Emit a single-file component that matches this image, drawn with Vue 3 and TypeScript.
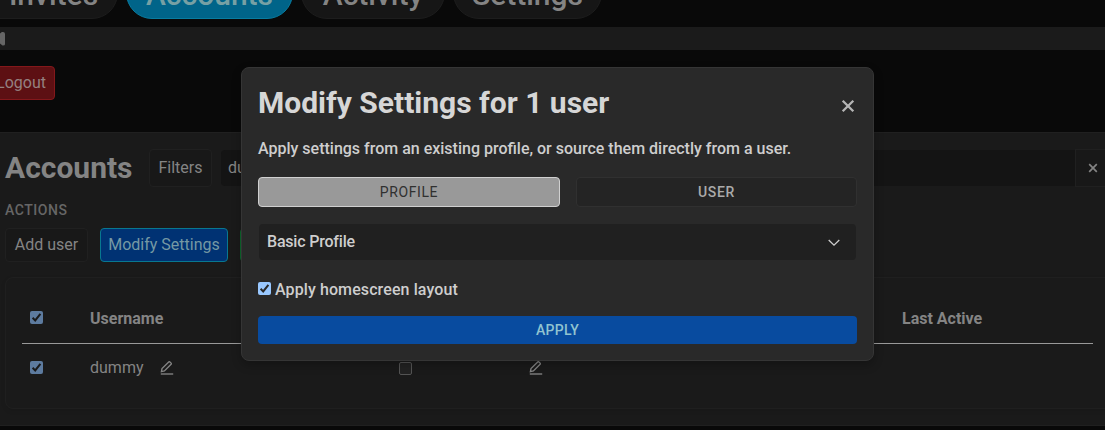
<script setup lang="ts">
import { ref } from 'vue'

const tabs = [
  { label: 'Invites', cls: 'invites' },
  { label: 'Accounts', cls: 'accounts' },
  { label: 'Activity', cls: 'activity' },
  { label: 'Settings', cls: 'settings' },
]
const active = ref('Accounts')
const source = ref<'profile' | 'user'>('profile')
const homescreen = ref(true)
</script>

<template>
  <div class="page">
    <nav class="tabs">
      <button v-for="t in tabs" :key="t.label" class="tab" :class="[t.cls, { on: active === t.label }]" @click="active = t.label">
        {{ t.label }}
      </button>
    </nav>
    <div class="track"><span class="thumb"></span></div>
    <div class="logout-row"><button class="logout"><span>Logout</span></button></div>

    <main class="card">
      <div class="head">
        <h1>Accounts</h1>
        <button class="btn filters">Filters</button>
        <div class="search">dummy</div>
        <button class="btn clear">
          <svg width="10" height="10" viewBox="0 0 10 10"><path d="M1.2 1.2l7.6 7.6M8.8 1.2L1.2 8.8" /></svg>
        </button>
      </div>
      <div class="label">ACTIONS</div>
      <div class="actions">
        <button class="btn add">Add user</button>
        <button class="btn modify">Modify Settings</button>
        <button class="btn green"></button>
      </div>
      <section class="table">
        <div class="row header">
          <span class="check"><svg viewBox="0 0 13 13"><path d="M2.6 6.8l2.6 2.6 5.2-6.6" /></svg></span>
          <span class="username">Username</span>
          <span class="last">Last Active</span>
        </div>
        <div class="row body">
          <span class="check"><svg viewBox="0 0 13 13"><path d="M2.6 6.8l2.6 2.6 5.2-6.6" /></svg></span>
          <span class="user">dummy</span>
          <svg class="pencil" viewBox="0 0 14 14"><path d="M1.4 10.6l.6-3L8.7.9q.6-.5 1.2 0l1.2 1.2q.5.6 0 1.2L4.4 10z" /><path d="M.8 13h12.4" /></svg>
          <span class="empty"></span>
          <svg class="pencil second" viewBox="0 0 14 14"><path d="M1.4 10.6l.6-3L8.7.9q.6-.5 1.2 0l1.2 1.2q.5.6 0 1.2L4.4 10z" /><path d="M.8 13h12.4" /></svg>
        </div>
      </section>
    </main>

    <div class="modal">
      <header>
        <h2>Modify Settings for 1 user</h2>
        <svg width="14" height="14" viewBox="0 0 14 14"><path d="M1.7 1.7l10.6 10.6M12.3 1.7L1.7 12.3" /></svg>
      </header>
      <p>Apply settings from an existing profile, or source them directly from a user.</p>
      <div class="choice">
        <button class="opt profile" :class="{ chosen: source === 'profile' }" @click="source = 'profile'">PROFILE</button>
        <button class="opt user-opt" :class="{ chosen: source === 'user' }" @click="source = 'user'">USER</button>
      </div>
      <div class="select">
        <span>Basic Profile</span>
        <svg width="12" height="8" viewBox="0 0 12 8"><path d="M.7 1l5.3 5.2L11.3 1" /></svg>
      </div>
      <div class="home" @click="homescreen = !homescreen">
        <span class="check bright"><svg v-if="homescreen" viewBox="0 0 13 13"><path d="M2.6 6.8l2.6 2.6 5.2-6.6" /></svg></span>
        <span class="home-text">Apply homescreen layout</span>
      </div>
      <button class="apply">APPLY</button>
    </div>
  </div>
</template>

<style>
body { margin: 0; background: #090909; }
</style>

<style scoped>
* { box-sizing: border-box; }
.page {
  position: relative;
  width: 1105px;
  height: 430px;
  overflow: hidden;
  background: #090909;
  font-family: Roboto, "Liberation Sans", sans-serif;
  font-size: 16px;
  line-height: 24px;
  color: #848484;
}
button { font: inherit; color: inherit; padding: 0; margin: 0; white-space: nowrap; }
svg { fill: none; stroke: currentColor; display: block; flex: none; }
h1, h2, p { margin: 0; white-space: nowrap; }
.tabs { display: flex; gap: 8px; height: 19px; margin-left: -30px; align-items: flex-end; }
.tab {
  flex: none;
  height: 52px;
  border: 1px solid #1d1d1d;
  border-radius: 26px;
  background: #161616;
  font-size: 30px;
  font-weight: 500;
  line-height: 50px;
  padding-top: 2px;
}
.invites { width: 148px; padding-left: 19px; }
.accounts { width: 167px; }
.activity { width: 144px; }
.settings { width: 149px; }
.tab.on { background: #006489; border-color: #087ca0; color: #77a0a4; }
.track { margin-top: 8px; height: 23px; background: #1b1b1b; display: flex; align-items: center; }
.thumb { width: 5px; height: 14px; background: #666; border-radius: 0 2px 2px 0; clip-path: polygon(0 15%, 50% 0, 100% 0, 100% 100%, 50% 100%, 0 85%); }
.logout-row { padding-top: 16px; height: 82px; }
.logout { display: block; width: 65px; height: 34px; margin-left: -10px; border: 1px solid #84181b; border-radius: 4px; background: #5d1013; color: #958080; text-align: right; padding-right: 8px; line-height: 32px; }
.card { height: 294px; background: #1a1a1a; border-top: 1px solid #202020; border-bottom: 1px solid #202020; padding: 16px 0 0 5px; }
.head { display: flex; align-items: center; height: 38px; }
h1 { width: 144px; font-size: 30px; line-height: 38px; font-weight: 700; }
.btn { flex: none; border: 1px solid #202020; border-radius: 4px; background: #181818; }
.filters { width: 63px; height: 38px; }
.search { margin-left: 9px; padding-left: 7px; flex: 1; height: 36px; line-height: 36px; background: #141414; border-radius: 4px 0 0 4px; }
.clear { width: 38px; height: 38px; border-radius: 0; padding-left: 12px; margin-right: -8px; }
.clear svg { stroke-width: 1.7; }
.label { margin-top: 12px; height: 22px; line-height: 22px; font-size: 14px; font-weight: 500; color: #666; letter-spacing: .55px; }
.actions { display: flex; gap: 12px; margin-top: 7px; }
.actions .btn { height: 34px; line-height: 32px; }
.add { width: 83px; }
.actions .modify { width: 128px; background: #003273; border-color: #087890; color: #7599a4; }
.actions .green { width: 90px; background: #0c4d24; border-color: #0d682d; }
.table { margin-top: 15px; height: 132px; width: 1120px; border: 1px solid #1f1f1f; border-radius: 8px; padding: 0 0 0 16px; box-shadow: 0 2px 5px rgba(0, 0, 0, .08); }
.row { display: flex; align-items: center; width: 1071px; padding-left: 8px; }
.header { height: 66px; padding-top: 16px; border-bottom: 1px solid #999; font-weight: 700; }
.body { height: 48px; }
.check { flex: none; width: 13px; height: 13px; border-radius: 2px; background: #5d7b9f; color: #1a1a1a; }
.row .check { margin-top: -2px; }
.check svg { stroke-width: 2; }
.username { margin-left: 47px; width: 812px; }
.user { margin-left: 47px; width: 70px; }
.pencil { width: 14px; height: 14px; stroke-width: 1.35; }
.empty { flex: none; width: 13px; height: 13px; margin-left: 225px; border: 1px solid #545454; border-radius: 2px; background: #222; }
.second { margin-left: 117px; }
.modal { position: absolute; left: 241px; top: 67px; width: 633px; height: 294px; background: #292929; border: 1px solid #353535; border-radius: 8px; padding: 15px 16px 0; box-shadow: 0 4px 10px rgba(0, 0, 0, .25); color: #cecece; }
.modal header { display: flex; height: 40px; align-items: center; justify-content: space-between; }
h2 { font-size: 30px; line-height: 40px; font-weight: 700; color: #d6d6d6; }
.modal header svg { margin-right: 2px; margin-top: 6px; color: #b5b5b5; stroke-width: 2.3; }
.modal p { margin-top: 14px; height: 24px; font-weight: 500; }
.choice { display: flex; gap: 16px; margin-top: 16px; }
.opt { height: 30px; border: 1px solid #303030; border-radius: 4px; background: #242424; color: #aaa; font-size: 14px; font-weight: 500; letter-spacing: .6px; }
.profile { width: 302px; }
.user-opt { width: 281px; }
.opt.chosen { background: #999; border-color: #d0d0d0; color: #303030; font-weight: 400; }
.select { display: flex; align-items: center; justify-content: space-between; height: 36px; margin: 17px 1px 0; padding: 0 16px 0 8px; border-radius: 4px; background: #202020; font-weight: 500; }
.select span { letter-spacing: -.2px; }
.select svg { margin-top: 2px; stroke-width: 1.3; }
.home { display: flex; align-items: center; gap: 4px; margin-top: 18px; height: 24px; font-weight: 500; }
.home-text { letter-spacing: .1px; }
.bright { background: #99c8ff; color: #292929; margin-top: -3px; }
.apply { display: block; width: 599px; height: 28px; margin-top: 14px; border: 0; border-radius: 4px; background: #084b9f; color: #91c4d0; font-size: 14px; font-weight: 500; letter-spacing: .3px; }
</style>
